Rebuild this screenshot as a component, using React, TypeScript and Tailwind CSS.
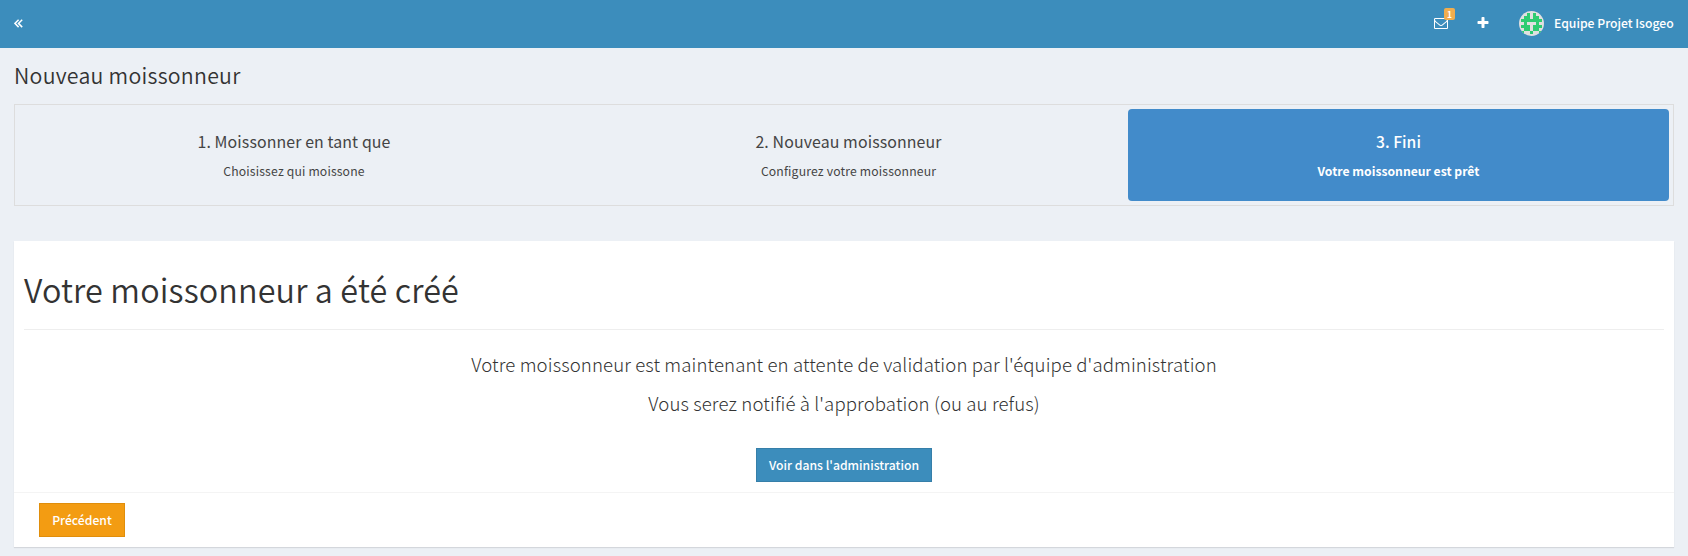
import React from "react";

const steps = [
  { title: "1. Moissonner en tant que", text: "Choisissez qui moissone", active: false },
  { title: "2. Nouveau moissonneur", text: "Configurez votre moissonneur", active: false },
  { title: "3. Fini", text: "Votre moissonneur est prêt", active: true },
];

const avatarRows = ["0010100", "0110110", "1111111", "0100010", "1110111", "0110110", "1001001"];

function Avatar() {
  return (
    <svg className="size-[25px] rounded-full" viewBox="0 0 25 25" shapeRendering="crispEdges">
      <rect width="25" height="25" fill="#e0e0e0" />
      {avatarRows.map((row, y) =>
        row.split("").map((c, x) =>
          c === "1" ? <rect key={`${x}-${y}`} x={2 + x * 3} y={2 + y * 3} width="3" height="3" fill="#2ecc71" /> : null,
        ),
      )}
    </svg>
  );
}

export default function App() {
  return (
    <div className="flex h-[556px] w-[1688px] flex-col overflow-hidden bg-[#ecf0f5] font-['Noto_Sans_CJK_SC',sans-serif] text-[12.2px] text-[#333]">
      <header className="flex h-12 shrink-0 items-center bg-[#3c8dbc] px-[14px] pb-[2px] text-white">
        <svg className="h-[9px] w-[9px]" viewBox="0 0 9 9" fill="none" stroke="currentColor" strokeWidth="1.5">
          <path d="M4.6 .7.9 4.4l3.7 3.7M8.2.7 4.5 4.4l3.7 3.7" />
        </svg>
        <div className="ml-auto flex items-center">
          <div className="relative mr-[28px] h-[14px] w-[14px]">
            <svg className="size-[14px]" viewBox="0 0 1792 1792" fill="currentColor">
              <path d="M1664 1504v-768q-32 36-69 66-268 206-426 338-51 43-83 67t-86.5 48.5-102.5 24.5h-2q-48 0-102.5-24.5t-86.5-48.5-83-67q-158-132-426-338-37-30-69-66v768q0 13 9.5 22.5t22.5 9.5h1472q13 0 22.5-9.5t9.5-22.5zm0-1051v-24.5l-.5-13-3-12.5-5.5-9-9-7.5-14-2.5h-1472q-13 0-22.5 9.5t-9.5 22.5q0 168 147 284 193 152 401 317 6 5 35 29.5t46 37.5 44.5 31.5 50.5 27.5 43 9h2q20 0 43-9t50.5-27.5 44.5-31.5 46-37.5 35-29.5q208-165 401-317 54-43 100.5-115.5t46.5-131.5zm128-37v1088q0 66-47 113t-113 47h-1472q-66 0-113-47t-47-113v-1088q0-66 47-113t113-47h1472q66 0 113 47t47 113z" />
            </svg>
            <span className="absolute -top-[8px] left-[10px] flex h-3 w-[11px] items-center justify-center rounded-[2px] bg-[#f0ad4e] text-[8.5px] font-bold leading-none">
              1
            </span>
          </div>
          <svg className="mr-[29px] size-[14px]" viewBox="0 0 1792 1792" fill="currentColor">
            <path d="M1600 736v192q0 40-28 68t-68 28h-416v416q0 40-28 68t-68 28h-192q-40 0-68-28t-28-68v-416h-416q-40 0-68-28t-28-68v-192q0-40 28-68t68-28h416v-416q0-40 28-68t68-28h192q40 0 68 28t28 68v416h416q40 0 68 28t28 68z" />
          </svg>
          <Avatar />
          <span className="ml-[10px] w-[120px] whitespace-nowrap font-medium leading-5">
            Equipe Projet Isogeo
          </span>
        </div>
      </header>

      <main className="flex flex-col px-[14px]">
        <h1 className="h-14 text-[21.3px] font-[350] leading-[54px] tracking-[0.26px]">Nouveau moissonneur</h1>

        <nav className="grid h-[102px] shrink-0 grid-cols-[550px_559px_541px] border border-[#ddd] p-1">
          {steps.map((s) => (
            <div
              key={s.title}
              className={
                s.active
                  ? "flex flex-col items-center rounded bg-[#428bca] pt-[23px] text-white"
                  : "flex flex-col items-center pt-[23px] text-[#444]"
              }
            >
              <h4
                className={
                  s.active ? "text-[15.7px] font-medium leading-5" : "text-[15.9px] leading-5 tracking-[0.11px]"
                }
              >
                {s.title}
              </h4>
              <p className={s.active ? "mt-[9px] font-bold leading-5" : "mt-[9px] leading-5 tracking-[0.16px]"}>
                {s.text}
              </p>
            </div>
          ))}
        </nav>

        <section className="mt-[35px] flex h-[306px] flex-col bg-white shadow-[0_1px_1px_rgba(0,0,0,0.1)]">
          <div className="mx-[10px] h-[89px] border-b border-[#eee] text-[32.3px] font-[350] leading-[97px] tracking-[0.14px]">
            Votre moissonneur a été créé
          </div>
          <div className="flex flex-col items-center pt-[14px] text-[18.6px] font-light leading-[39px] tracking-[0.11px]">
            <p>Votre moissonneur est maintenant en attente de validation par l'équipe d'administration</p>
            <p>Vous serez notifié à l'approbation (ou au refus)</p>
          </div>
          <button className="mt-[26px] h-[34px] w-[176px] shrink-0 self-center border border-[#367fa9] bg-[#3c8dbc] font-medium leading-8 text-white">
            Voir dans l'administration
          </button>
          <footer className="mt-[10px] flex h-[55px] items-center border-t border-[#f4f4f4] pl-[25px]">
            <button className="h-[34px] w-[86px] border border-[#e08e0b] bg-[#f39c12] font-medium leading-8 text-white">
              Précédent
            </button>
          </footer>
        </section>
      </main>
    </div>
  );
}
